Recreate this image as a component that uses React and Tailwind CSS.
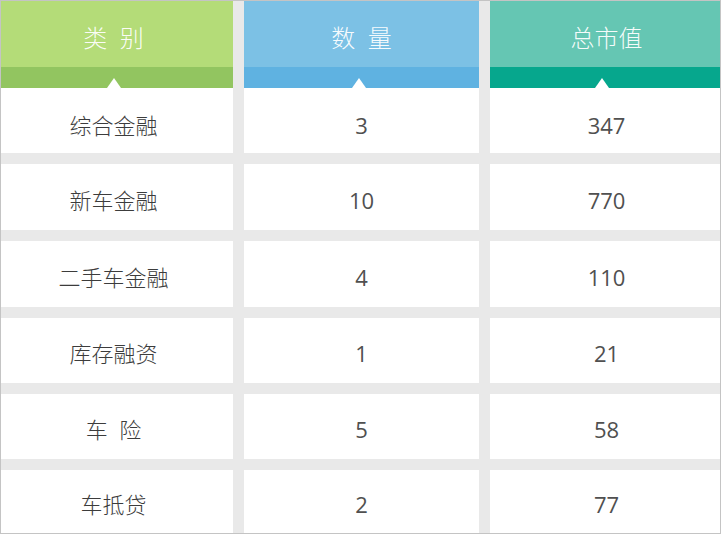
const columns = [
  {
    title: "类  别",
    width: "w-[232px]",
    shift: "pr-[7px]",
    light: "bg-[#b4dc78]",
    dark: "bg-[#92c560]",
    cells: ["综合金融", "新车金融", "二手车金融", "库存融资", "车  险", "车抵贷"],
  },
  {
    title: "数  量",
    width: "w-[235px]",
    shift: "",
    light: "bg-[#7cc1e5]",
    dark: "bg-[#5fb2e1]",
    cells: ["3", "10", "4", "1", "5", "2"],
  },
  {
    title: "总市值",
    width: "w-[230px]",
    shift: "pl-[3px]",
    light: "bg-[#65c6b3]",
    dark: "bg-[#06a78d]",
    cells: ["347", "770", "110", "21", "58", "77"],
  },
];

const rowHeights = ["h-[65px]", "h-[66px]", "h-[66px]", "h-[65px]", "h-[65px]", "h-[63px]"];

const Cell = ({ text, h, first, shift }) => {
  const isNum = /^\d+$/.test(text);
  return (
    <div className={`bg-white ${h} ${shift} flex items-center justify-center ${first ? "pt-[10px]" : "pt-[6px]"}`}>
      <span
        className={`text-[22px] whitespace-pre ${isNum ? "font-normal text-[#505050]" : "font-light text-[#3c3c3c]"}`}
      >
        {text}
      </span>
    </div>
  );
};

const Column = ({ col }) => (
  <div className={`${col.width} flex flex-col gap-[11px]`}>
    {/* header */}
    <div className="flex flex-col">
      <div className={`h-[66px] ${col.light} ${col.shift} flex items-center justify-center pt-[8px]`}>
        <span className="text-[24px] font-light text-white/95 whitespace-pre">{col.title}</span>
      </div>
      <div className={`relative h-[21px] ${col.dark}`}>
        <div className="absolute bottom-0 left-1/2 -translate-x-[10px] w-0 h-0 border-l-[7px] border-r-[7px] border-b-[10px] border-l-transparent border-r-transparent border-b-white" />
      </div>
      <Cell text={col.cells[0]} h={rowHeights[0]} shift={col.shift} first />
    </div>
    {col.cells.slice(1).map((c, i) => (
      <Cell key={i} text={c} h={rowHeights[i + 1]} shift={col.shift} />
    ))}
  </div>
);

export default function App() {
  return (
    <div
      className="w-[721px] h-[534px] border border-[#c4c4c4] bg-[#e9e9e9] flex gap-[11px] overflow-hidden"
      style={{ fontFamily: '"Open Sans", "Noto Sans CJK SC", sans-serif' }}
    >
      {columns.map((col) => (
        <Column key={col.title} col={col} />
      ))}
    </div>
  );
}
